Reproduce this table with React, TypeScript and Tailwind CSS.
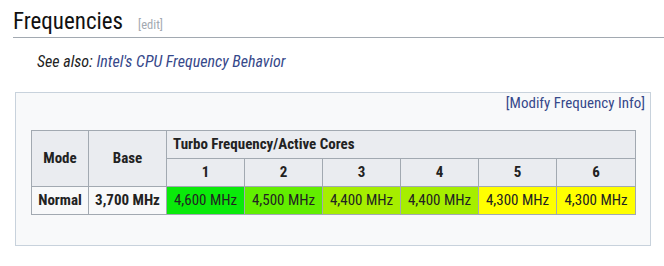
import React from 'react';

const cores = [
  { n: 1, value: '4,600 MHz', bg: 'bg-[#0aea0a]' },
  { n: 2, value: '4,500 MHz', bg: 'bg-[#62ee00]' },
  { n: 3, value: '4,400 MHz', bg: 'bg-[#a6ee00]' },
  { n: 4, value: '4,400 MHz', bg: 'bg-[#a6ee00]' },
  { n: 5, value: '4,300 MHz', bg: 'bg-[#ffff00]' },
  { n: 6, value: '4,300 MHz', bg: 'bg-[#ffff00]' },
];

const App: React.FC = () => {
  return (
    <div className="w-[664px] h-[266px] bg-white text-[#222] font-['Roboto',sans-serif] font-stretch-condensed overflow-hidden">
      {/* Section heading */}
      <div className="ml-[13px] pt-[8px] h-[38px] border-b border-[#a2a9b1] flex items-baseline">
        <h2 className="text-[23px] leading-[28px] text-[#111]">Frequencies</h2>
        <span className="ml-[15px] text-[12.5px] text-[#a2a9b1]">[edit]</span>
      </div>

      {/* See also */}
      <div className="ml-[37px] mt-[14px] text-[16px] leading-[20px] italic">
        See also: <a className="text-[#36488a]">Intel's CPU Frequency Behavior</a>
      </div>

      {/* Frequency box */}
      <div className="ml-[15px] mt-[20px] w-[636px] h-[154px] bg-[#f8f9fa] border border-[#c8d2dc]">
        <div className="flex justify-end pr-[5px] text-[15px] leading-[20px] text-[#36488a]">
          [Modify Frequency Info]
        </div>
        <table className="ml-[15px] mt-[17px] border-collapse text-[15px] table-fixed">
          <thead>
            <tr className="h-[28px]">
              <th rowSpan={2} className="w-[57px] border border-[#a2a9b1] bg-[#eaecf0] font-bold">Mode</th>
              <th rowSpan={2} className="w-[78px] border border-[#a2a9b1] bg-[#eaecf0] font-bold">Base</th>
              <th colSpan={6} className="border border-[#a2a9b1] bg-[#eaecf0] font-bold text-left pl-[6px]">
                Turbo Frequency/Active Cores
              </th>
            </tr>
            <tr className="h-[28px]">
              {cores.map((c) => (
                <th key={c.n} className={`${c.n === 6 ? 'w-[79px]' : 'w-[78px]'} border border-[#a2a9b1] bg-[#eaecf0] font-bold`}>
                  {c.n}
                </th>
              ))}
            </tr>
          </thead>
          <tbody>
            <tr className="h-[28px]">
              <td className="border border-[#a2a9b1] bg-[#f8f9fa] font-bold text-center">Normal</td>
              <td className="border border-[#a2a9b1] bg-[#f8f9fa] font-bold text-center">3,700 MHz</td>
              {cores.map((c) => (
                <td key={c.n} className={`${c.bg} border border-[#a2a9b1] text-center`}>
                  {c.value}
                </td>
              ))}
            </tr>
          </tbody>
        </table>
      </div>
    </div>
  );
};

export default App;
